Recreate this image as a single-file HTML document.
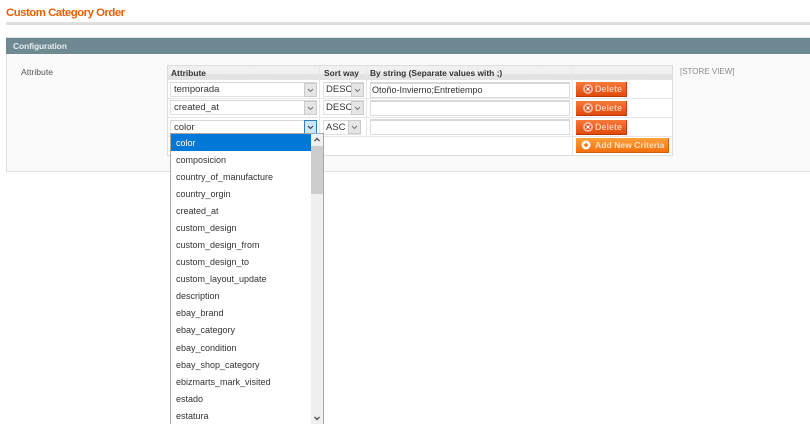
<!DOCTYPE html>
<html><head><meta charset="utf-8">
<style>
html,body{margin:0;padding:0;background:#fff}
body{width:810px;height:424px;overflow:hidden;position:relative;font-family:"Liberation Sans",sans-serif;font-size:9.5px;color:#2f2f2f;filter:blur(.3px)}
div,span{position:absolute;box-sizing:border-box;white-space:nowrap}
svg{position:absolute}
.sel{background:#fff;border:1px solid #e0e0e0;border-top-color:#d6d6d6;height:15px;font-size:9.5px;line-height:13px;padding-left:3px;color:#333}
.arr{background:#e6e6e6;border:1px solid #cbcbcb;width:13px;height:14px}
.inp{background:#fff;border:1px solid #dcdcdc;border-top:2px solid #d8d8d8;height:16px;font-size:9px;line-height:13px;padding-left:1px;color:#333}
.btn{background:linear-gradient(#f77a3a,#e04a0c);border-right:1px solid #c43d08;border-bottom:1px solid #b93606;color:#fbc9ad;font-weight:bold;font-size:9px;height:15px;line-height:14px;width:51px;left:576px}
.btn span{left:19px;top:0}
.opt{left:176px;font-size:9px;color:#333;line-height:12px}
.th{font-weight:bold;font-size:8.4px;color:#333;top:68px;line-height:11px}
</style></head><body>
<div style="left:6px;top:6px;font-size:11.4px;letter-spacing:-.5px;font-weight:bold;color:#eb5e00;line-height:14px">Custom Category Order</div>
<div style="left:6px;top:22px;width:804px;height:3px;background:#dfdfdf"></div>

<div style="left:6px;top:37px;width:804px;height:135px;background:#fafafa;border:1px solid #e0e0e0;border-right:0"></div>
<div style="left:6px;top:38px;width:804px;height:16px;background:#6f8993"></div>
<div style="left:13px;top:40px;font-size:8.5px;letter-spacing:-.15px;font-weight:bold;color:#e4eced;line-height:12px">Configuration</div>
<div style="left:21px;top:66px;font-size:8.6px;color:#555;line-height:12px">Attribute</div>
<div style="left:680px;top:66px;font-size:8px;color:#8a8a8a;line-height:12px">[STORE VIEW]</div>

<div style="left:167px;top:65px;width:506px;height:91px;background:#fff;border:1px solid #d8e0e2"></div>
<div style="left:168px;top:66px;width:504px;height:14px;background:repeating-linear-gradient(45deg,#ececec 0 1px,#f4f4f4 1px 2px)"></div>
<div style="left:168px;top:74px;width:504px;height:6px;background:#e3e3e3"></div>
<div style="left:319px;top:66px;width:1px;height:71px;background:#e2e8ea"></div>
<div style="left:366px;top:66px;width:1px;height:71px;background:#e2e8ea"></div>
<div style="left:572px;top:66px;width:1px;height:89px;background:#e2e8ea"></div>
<div style="left:168px;top:98px;width:504px;height:1px;background:#e4e8e9"></div>
<div style="left:168px;top:117px;width:504px;height:1px;background:#e4e8e9"></div>
<div style="left:168px;top:136px;width:504px;height:1px;background:#e4e8e9"></div>

<div class="th" style="left:171px">Attribute</div>
<div class="th" style="left:324px">Sort way</div>
<div class="th" style="left:370px">By string (Separate values with ;)</div>

<div class="sel" style="left:170px;top:82px;width:147px">temporada</div>
<div class="arr" style="left:304px;top:83px"><svg width="11" height="12" style="left:0;top:0"><path d="M3 5l2.5 2.5L8 5" fill="none" stroke="#777" stroke-width="1"/></svg></div>
<div class="sel" style="left:170px;top:100px;width:147px">created_at</div>
<div class="arr" style="left:304px;top:101px"><svg width="11" height="12" style="left:0;top:0"><path d="M3 5l2.5 2.5L8 5" fill="none" stroke="#777" stroke-width="1"/></svg></div>
<div class="sel" style="left:170px;top:120px;width:147px">color</div>
<div class="arr" style="left:304px;top:120px;background:#cfe6f7;border-color:#2b80c5"><svg width="11" height="12" style="left:0;top:0"><path d="M3 5l2.5 2.5L8 5" fill="none" stroke="#234" stroke-width="1"/></svg></div>

<div class="sel" style="left:323px;top:82px;width:41px;padding-left:2px">DESC</div>
<div class="arr" style="left:351px;top:83px"><svg width="11" height="12" style="left:0;top:0"><path d="M3 5l2.5 2.5L8 5" fill="none" stroke="#777" stroke-width="1"/></svg></div>
<div class="sel" style="left:323px;top:100px;width:41px;padding-left:2px">DESC</div>
<div class="arr" style="left:351px;top:101px"><svg width="11" height="12" style="left:0;top:0"><path d="M3 5l2.5 2.5L8 5" fill="none" stroke="#777" stroke-width="1"/></svg></div>
<div class="sel" style="left:323px;top:120px;width:38px;padding-left:2px">ASC</div>
<div class="arr" style="left:348px;top:120px"><svg width="11" height="12" style="left:0;top:0"><path d="M3 5l2.5 2.5L8 5" fill="none" stroke="#777" stroke-width="1"/></svg></div>

<div class="inp" style="left:370px;top:82px;width:200px">Otoño-Invierno;Entretiempo</div>
<div class="inp" style="left:370px;top:100px;width:200px"></div>
<div class="inp" style="left:370px;top:119px;width:200px"></div>

<div class="btn" style="top:82px"><svg width="12" height="12" style="left:6px;top:1px"><circle cx="6" cy="6" r="5" fill="#f3b79c"/><circle cx="6" cy="6" r="3" fill="#d8431a"/><path d="M4.4 4.4l3.2 3.2M7.6 4.4l-3.2 3.2" stroke="#fff" stroke-width="1.2"/></svg><span>Delete</span></div>
<div class="btn" style="top:101px"><svg width="12" height="12" style="left:6px;top:1px"><circle cx="6" cy="6" r="5" fill="#f3b79c"/><circle cx="6" cy="6" r="3" fill="#d8431a"/><path d="M4.4 4.4l3.2 3.2M7.6 4.4l-3.2 3.2" stroke="#fff" stroke-width="1.2"/></svg><span>Delete</span></div>
<div class="btn" style="top:120px"><svg width="12" height="12" style="left:6px;top:1px"><circle cx="6" cy="6" r="5" fill="#f3b79c"/><circle cx="6" cy="6" r="3" fill="#d8431a"/><path d="M4.4 4.4l3.2 3.2M7.6 4.4l-3.2 3.2" stroke="#fff" stroke-width="1.2"/></svg><span>Delete</span></div>
<div class="btn" style="top:138px;width:93px;background:linear-gradient(#ffa23c,#f26f0c);border-color:#cf5f08;color:#ffe0c0;font-size:8.6px"><svg width="12" height="12" style="left:4px;top:1px"><circle cx="6" cy="6" r="4.5" fill="#fff"/><path d="M3.8 6h4.4M6 3.8v4.4" stroke="#f07010" stroke-width="1.4"/></svg><span>Add New Criteria</span></div>

<div style="left:170px;top:133px;width:154px;height:291px;background:#fff;border:1px solid #a8a8a8;border-bottom:0"></div>
<div style="left:171px;top:134px;width:140px;height:17px;background:#0078d7"></div>
<div style="left:311px;top:134px;width:12px;height:290px;background:#f0f0f0"></div>
<div style="left:311px;top:146px;width:12px;height:48px;background:#cdcdcd"></div>
<svg width="12" height="12" style="left:311px;top:134px"><path d="M3.5 7l2.5-2.5 2.5 2.5" fill="none" stroke="#505050" stroke-width="1.4"/></svg>
<svg width="12" height="12" style="left:311px;top:412px"><path d="M3.5 5l2.5 2.5 2.5-2.5" fill="none" stroke="#505050" stroke-width="1.4"/></svg>

<div class="opt" style="top:137px;color:#fff">color</div>
<div class="opt" style="top:154px">composicion</div>
<div class="opt" style="top:171px">country_of_manufacture</div>
<div class="opt" style="top:188px">country_orgin</div>
<div class="opt" style="top:205px">created_at</div>
<div class="opt" style="top:222px">custom_design</div>
<div class="opt" style="top:239px">custom_design_from</div>
<div class="opt" style="top:256px">custom_design_to</div>
<div class="opt" style="top:273px">custom_layout_update</div>
<div class="opt" style="top:290px">description</div>
<div class="opt" style="top:307px">ebay_brand</div>
<div class="opt" style="top:324px">ebay_category</div>
<div class="opt" style="top:342px">ebay_condition</div>
<div class="opt" style="top:359px">ebay_shop_category</div>
<div class="opt" style="top:376px">ebizmarts_mark_visited</div>
<div class="opt" style="top:393px">estado</div>
<div class="opt" style="top:410px">estatura</div>
</body></html>
